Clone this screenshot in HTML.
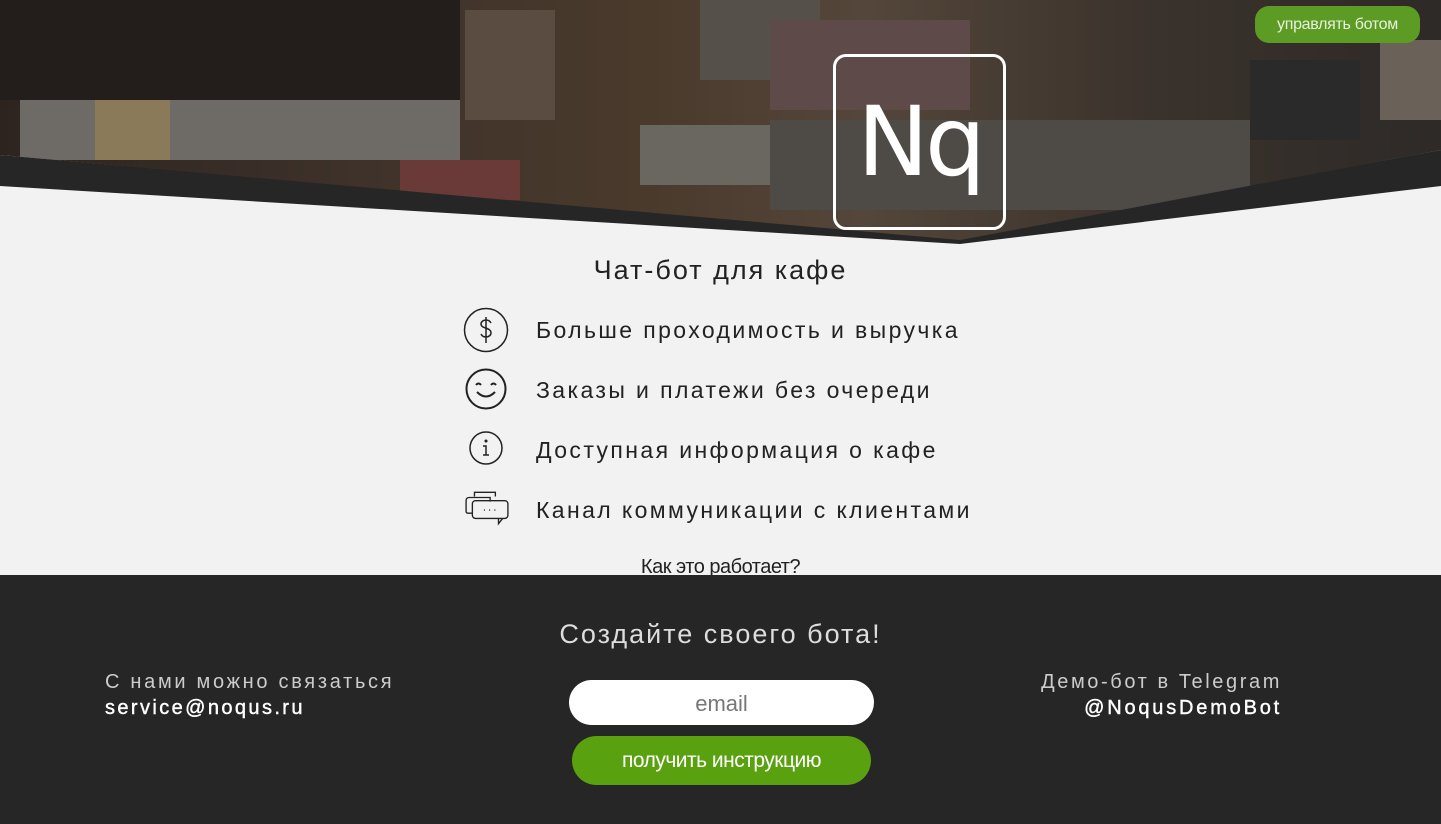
<!DOCTYPE html>
<html><head><meta charset="utf-8"><style>
*{margin:0;padding:0;box-sizing:border-box}
body{width:1441px;height:824px;overflow:hidden;background:#f2f2f2;font-family:"Liberation Sans","DejaVu Sans",sans-serif;position:relative}
.hero{position:absolute;left:0;top:0;width:1441px;height:250px}
.btn1{position:absolute;left:1255px;top:6px;width:165px;height:37px;border-radius:14px;background:#5c9b24;color:#e8f0de;font-size:16px;line-height:37px;text-align:center;letter-spacing:-0.3px}
.logo{position:absolute;left:833px;top:54px;width:173px;height:176px;border:3px solid #fff;border-radius:13px;color:#fff;font-size:96px;text-align:center;line-height:170px;font-family:"DejaVu Sans",sans-serif;letter-spacing:-4px}
h1{position:absolute;left:0;width:1441px;top:255px;text-align:center;font-size:27px;font-weight:normal;color:#222;letter-spacing:2px}
.row{position:absolute;left:536px;font-size:23px;color:#222;letter-spacing:2.4px}
.ic{position:absolute}
.how{position:absolute;left:0;width:1441px;top:556px;text-align:center;font-size:20px;color:#222;letter-spacing:-0.5px}
.foot{position:absolute;left:0;top:575px;width:1441px;height:249px;background:#262626}
.ft{position:absolute;left:0;width:1441px;top:44px;text-align:center;color:#ddd;font-size:27px;letter-spacing:2px}
.l1{position:absolute;left:105px;top:96px;color:#ccc;font-size:20px;letter-spacing:2.7px}
.l2{position:absolute;left:105px;top:122px;color:#fff;font-size:20px;letter-spacing:2.4px;font-weight:500;-webkit-text-stroke:0.4px #fff}
.r1{position:absolute;right:159px;top:96px;color:#ccc;font-size:20px;letter-spacing:2.6px;text-align:right}
.r2{position:absolute;right:159px;top:122px;color:#fff;font-size:20px;letter-spacing:2.8px;text-align:right;-webkit-text-stroke:0.4px #fff}
.inp{position:absolute;left:569px;top:105px;width:305px;height:45px;border-radius:23px;background:#fff;color:#777;font-size:22px;text-align:center;line-height:47px}
.btn2{position:absolute;left:572px;top:161px;width:299px;height:49px;border-radius:25px;background:#5aa10f;color:#fff;font-size:21px;text-align:center;line-height:49px;letter-spacing:-0.5px}
</style></head><body>
<svg class="hero" width="1441" height="250" viewBox="0 0 1441 250">
<defs>
<linearGradient id="g" x1="0" y1="0" x2="1" y2="0">
<stop offset="0" stop-color="#2d2420"/><stop offset="0.25" stop-color="#3e322a"/><stop offset="0.45" stop-color="#4a3a2c"/><stop offset="0.6" stop-color="#54463a"/><stop offset="0.8" stop-color="#3a322c"/><stop offset="1" stop-color="#2e2a28"/>
</linearGradient>
<clipPath id="c"><polygon points="0,0 1441,0 1441,150 960,240 0,155"/></clipPath>
</defs>
<polygon points="0,155 0,186 960,244 1441,186 1441,150 960,238" fill="#262626"/>
<g clip-path="url(#c)">
<rect width="1441" height="250" fill="url(#g)"/>
<rect x="0" y="0" width="460" height="100" fill="#231e1b"/>
<rect x="20" y="100" width="440" height="60" fill="#6e6a66"/>
<rect x="95" y="100" width="75" height="60" fill="#8a7a5a"/>
<rect x="465" y="10" width="90" height="110" fill="#5a4c40"/>
<rect x="640" y="125" width="130" height="60" fill="#6a6660"/>
<rect x="700" y="0" width="120" height="80" fill="#55504a"/>
<rect x="770" y="20" width="200" height="90" fill="#5e4a48"/>
<rect x="770" y="120" width="480" height="90" fill="#4e4a46"/>
<rect x="1250" y="60" width="110" height="80" fill="#2a2a2a"/>
<rect x="1380" y="40" width="61" height="80" fill="#6a6258"/>
<rect x="400" y="160" width="120" height="40" fill="#6a3a38"/>
</g>
</svg>
<div class="btn1">управлять ботом</div>
<div class="logo">Nq</div>
<h1>Чат-бот для кафе</h1>
<svg class="ic" style="left:463px;top:307px" width="46" height="46" viewBox="0 0 46 46" fill="none" stroke="#222" stroke-width="1.5"><circle cx="23" cy="23" r="21.5"/><path d="M28 16c-1-2-3-3-5-3-3 0-5 2-5 4 0 5 10 3 10 9 0 2-2 4-5 4-2 0-4-1-5-3M23 10v26"/></svg>
<div class="row" style="top:317px">Больше проходимость и выручка</div>
<svg class="ic" style="left:465px;top:368px" width="44" height="42" viewBox="0 0 44 42" fill="none" stroke="#222" stroke-width="2"><circle cx="21" cy="21" r="19.5"/><path d="M11 17q2.5-3 5 0M26 17q2.5-3 5 0M12 24q9 9 18 0"/></svg>
<div class="row" style="top:377px">Заказы и платежи без очереди</div>
<svg class="ic" style="left:469px;top:431px" width="36" height="36" viewBox="0 0 36 36" fill="none" stroke="#222" stroke-width="1.5"><circle cx="17" cy="17" r="16"/><path d="M14 15h3v9M14 24h6"/><circle cx="17" cy="10" r="0.8" fill="#222"/></svg>
<div class="row" style="top:437px">Доступная информация о кафе</div>
<svg class="ic" style="left:464px;top:489px" width="46" height="40" viewBox="0 0 44 36" fill="none" stroke="#222" stroke-width="1.3"><path d="M10 6V2h20v4M2 10q0-3 3-3h20v4M2 10v10q0 2 2 2h4"/><rect x="8" y="10" width="34" height="17" rx="3"/><path d="M33 27v5l4-5"/><path d="M19 19h1M24 19h1M29 19h1"/></svg>
<div class="row" style="top:497px">Канал коммуникации с клиентами</div>
<div class="how">Как это работает?</div>
<div class="foot">
<div class="ft">Создайте своего бота!</div>
<div class="l1">С нами можно связаться</div>
<div class="l2">service@noqus.ru</div>
<div class="r1">Демо-бот в Telegram</div>
<div class="r2">@NoqusDemoBot</div>
<div class="inp">email</div>
<div class="btn2">получить инструкцию</div>
</div>
</body></html>
